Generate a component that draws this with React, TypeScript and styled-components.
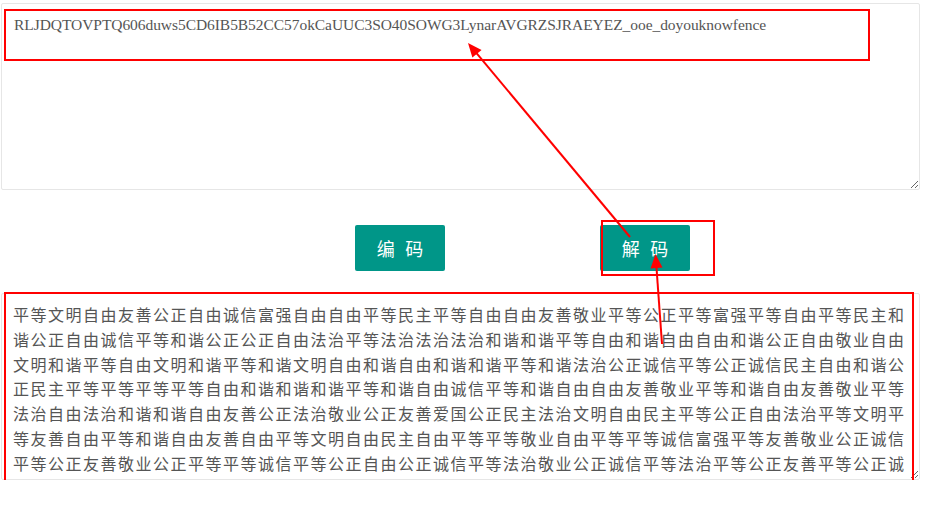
import React from 'react'
import styled, { createGlobalStyle } from 'styled-components'

const GlobalStyle = createGlobalStyle`
  html, body {
    margin: 0;
    background: #fff;
  }
`

const encoded =
  'RLJDQTOVPTQ606duws5CD6IB5B52CC57okCaUUC3SO40SOWG3LynarAVGRZSJRAEYEZ_ooe_doyouknowfence'

const plain = [
  '平等文明自由友善公正自由诚信富强自由自由平等民主平等自由自由友善敬业平等公正平等富强平等自由平等民主和',
  '谐公正自由诚信平等和谐公正公正自由法治平等法治法治法治和谐和谐平等自由和谐自由自由和谐公正自由敬业自由',
  '文明和谐平等自由文明和谐平等和谐文明自由和谐自由和谐和谐平等和谐法治公正诚信平等公正诚信民主自由和谐公',
  '正民主平等平等平等平等自由和谐和谐和谐平等和谐自由诚信平等和谐自由自由友善敬业平等和谐自由友善敬业平等',
  '法治自由法治和谐和谐自由友善公正法治敬业公正友善爱国公正民主法治文明自由民主平等公正自由法治平等文明平',
  '等友善自由平等和谐自由友善自由平等文明自由民主自由平等平等敬业自由平等平等诚信富强平等友善敬业公正诚信',
  '平等公正友善敬业公正平等平等诚信平等公正自由公正诚信平等法治敬业公正诚信平等法治平等公正友善平等公正诚',
].join('')

const Page = styled.div`
  position: relative;
  width: 919px;
  padding: 3px 0 0 1px;
  display: flex;
  flex-direction: column;
`

const TextArea = styled.textarea`
  display: block;
  box-sizing: border-box;
  width: 919px;
  height: 187px;
  margin: 0;
  padding: 8px 10px 8px 11px;
  border: 1px solid #e6e6e6;
  border-radius: 2px;
  background: #fff;
  color: #555;
  line-height: 24.75px;
  overflow: hidden;
  outline: none;
`

const CodeArea = styled(TextArea)`
  padding-top: 9px;
  padding-left: 12px;
  font-family: 'Liberation Serif', serif;
  font-size: 15.5px;
  letter-spacing: -0.06px;
`

const TextBody = styled(TextArea)`
  font-family: 'Noto Sans CJK SC', sans-serif;
  font-size: 16px;
  letter-spacing: 1.5px;
`

const Actions = styled.div`
  display: flex;
  gap: 155px;
  padding-left: 354px;
  margin: 35px 0 22px;
`

const ActionButton = styled.button`
  width: 90px;
  height: 46px;
  padding: 0 0 0 10.5px;
  border: none;
  border-radius: 2px;
  background: #009688;
  color: #fff;
  font-family: 'Noto Sans CJK SC', sans-serif;
  font-size: 18px;
  letter-spacing: 10.5px;
  cursor: pointer;
`

const Overlay = styled.svg`
  position: absolute;
  left: 0;
  top: 0;
  pointer-events: none;
`

type Pt = [number, number]

const arrowHead = (from: Pt, to: Pt, len = 14, half = 6) => {
  const dx = to[0] - from[0]
  const dy = to[1] - from[1]
  const d = Math.hypot(dx, dy)
  const ux = dx / d
  const uy = dy / d
  const bx = to[0] - ux * len
  const by = to[1] - uy * len
  return [
    `${to[0]},${to[1]}`,
    `${bx - uy * half},${by + ux * half}`,
    `${bx + uy * half},${by - ux * half}`,
  ].join(' ')
}

const Arrow = ({ from, to }: { from: Pt; to: Pt }) => {
  const d = Math.hypot(to[0] - from[0], to[1] - from[1])
  const k = (d - 10) / d
  const end: Pt = [from[0] + (to[0] - from[0]) * k, from[1] + (to[1] - from[1]) * k]
  return (
    <g>
      <line x1={from[0]} y1={from[1]} x2={end[0]} y2={end[1]} stroke="#ff0000" strokeWidth={2} />
      <polygon points={arrowHead(from, to)} fill="#ff0000" />
    </g>
  )
}

const Annotations = () => (
  <Overlay width={927} height={517} viewBox="0 0 927 517">
    <g fill="none" stroke="#ff0000" strokeWidth={2}>
      <rect x={5} y={10} width={864} height={50} />
      <rect x={602} y={221} width={112} height={54} />
      <rect x={5} y={293} width={908} height={192} />
    </g>
    <Arrow from={[630, 237]} to={[468, 43]} />
    <Arrow from={[662, 344]} to={[655.5, 254]} />
  </Overlay>
)

const App = () => {
  return (
    <Page>
      <GlobalStyle />
      <CodeArea defaultValue={encoded} spellCheck={false} />
      <Actions>
        <ActionButton>编码</ActionButton>
        <ActionButton>解码</ActionButton>
      </Actions>
      <TextBody defaultValue={plain} spellCheck={false} />
      <Annotations />
    </Page>
  )
}

export default App
